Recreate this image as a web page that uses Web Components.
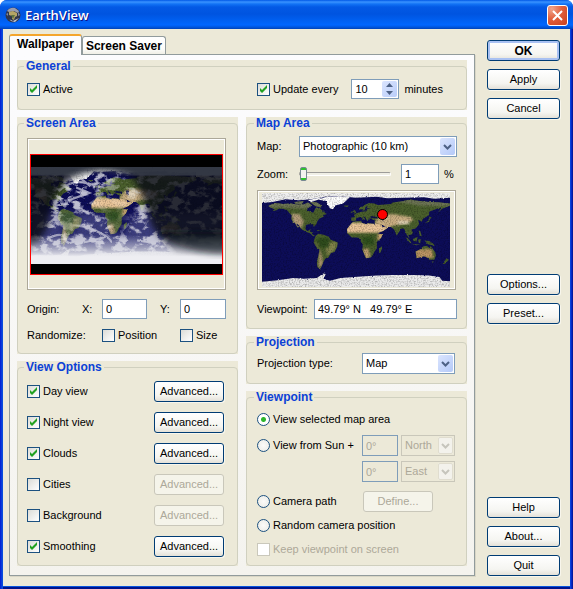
<!DOCTYPE html>
<html lang="en">
<head>
<meta charset="utf-8">
<title>EarthView</title>
<style>
body { margin: 0; background: #fff; font: 11px/13px "Liberation Sans", Arial, sans-serif; color: #000; }
.tabpage { display: grid; grid-template-columns: 1fr 1fr; gap: 7px 8px; align-items: stretch; }
.wide { grid-column: 1 / -1; }
.half { display: grid; grid-template-columns: 1fr 1fr; column-gap: 30px; align-items: center; padding: 6px 0 10px; }
.col { display: flex; flex-direction: column; gap: 7px; }
.grow { flex: 1; }
.right { --pad: 10px; }
.line { display: flex; align-items: center; }
.every { gap: 13px; }
.unit { margin-left: -8px; }
.screen { padding: 8px 2px 9px 0; }
.origin { display: grid; grid-template-columns: 55px 20px 58px 20px 1fr; grid-template-rows: 20px 17px; row-gap: 8px; align-items: center; margin-top: 9px; }
.origin .a { grid-column: 1 / 3; }
.origin .b { grid-column: 3; }
.origin .c { grid-column: 4 / 6; padding-left: 20px; }
.proj { padding: 4px 2px 9px 0; display: grid; grid-template-columns: 1fr 93px; align-items: center; }
.opts { display: grid; grid-template-columns: 1fr 70px; gap: 10px 0; align-items: center; padding: 7px 4px 8px 0; }
</style>
</head>
<body>
<xp-window caption="EarthView">
  <xp-tabs slot="main">
    <div class="tabpage">
      <xp-group class="wide" caption="General">
        <div class="half">
          <xp-check checked>Active</xp-check>
          <div class="line every">
            <xp-check checked>Update every</xp-check>
            <xp-spin value="10"></xp-spin>
            <span class="unit">minutes</span>
          </div>
        </div>
      </xp-group>
      <div class="col">
        <xp-group caption="Screen Area">
          <div class="screen">
            <xp-screen></xp-screen>
            <div class="origin">
              <span>Origin:</span>
              <xp-field label="X:" value="0" width="45px"></xp-field>
              <xp-field label="Y:" value="0"></xp-field>
              <span class="a">Randomize:</span>
              <xp-check class="b">Position</xp-check>
              <xp-check class="c">Size</xp-check>
            </div>
          </div>
        </xp-group>
        <xp-group class="grow" caption="View Options">
          <div class="opts">
            <xp-check checked>Day view</xp-check><xp-button>Advanced...</xp-button>
            <xp-check checked>Night view</xp-check><xp-button>Advanced...</xp-button>
            <xp-check checked>Clouds</xp-check><xp-button>Advanced...</xp-button>
            <xp-check>Cities</xp-check><xp-button disabled>Advanced...</xp-button>
            <xp-check>Background</xp-check><xp-button disabled>Advanced...</xp-button>
            <xp-check checked>Smoothing</xp-check><xp-button>Advanced...</xp-button>
          </div>
        </xp-group>
      </div>
      <div class="col right">
        <xp-group caption="Map Area">
          <xp-maparea></xp-maparea>
        </xp-group>
        <xp-group caption="Projection">
          <div class="proj"><xp-select label="Projection type:" options="Map"></xp-select></div>
        </xp-group>
        <xp-group class="grow" caption="Viewpoint">
          <xp-viewpoint></xp-viewpoint>
        </xp-group>
      </div>
    </div>
  </xp-tabs>
  <xp-sidebar slot="side"></xp-sidebar>
</xp-window>

<template id="earth">
  <svg viewBox="0 0 360 180" preserveAspectRatio="none" aria-hidden="true">
    <defs>
      <filter id="rough" x="0" y="0" width="100%" height="100%" color-interpolation-filters="sRGB">
        <feTurbulence type="fractalNoise" baseFrequency=".22" numOctaves="2" seed="4" result="n"/>
        <feDisplacementMap in="SourceGraphic" in2="n" scale="4" xChannelSelector="R" yChannelSelector="G"/>
      </filter>
      <filter id="grain" x="0" y="0" width="100%" height="100%" color-interpolation-filters="sRGB">
        <feTurbulence type="fractalNoise" baseFrequency=".35" numOctaves="3" seed="9"/>
        <feColorMatrix values="0 0 0 0 0  0 0 0 0 0  0 0 0 0 0  2.6 0 0 0 -1.1"/>
      </filter>
      <filter id="clouds" x="0" y="0" width="100%" height="100%" color-interpolation-filters="sRGB">
        <feTurbulence type="fractalNoise" baseFrequency=".05 .07" numOctaves="6" seed="31"/>
        <feColorMatrix values="0 0 0 0 1  0 0 0 0 1  0 0 0 0 1  6 0 0 0 -2.9"/>
      </filter>
      <filter id="soft" x="-20%" y="-20%" width="140%" height="140%"><feGaussianBlur stdDeviation="6"/></filter>
      <filter id="blend"><feGaussianBlur stdDeviation="2.5"/></filter>
      <clipPath id="land">
        <path d="M12 25 24 19 40 21 55 20 66 22 80 22 88 18 96 24 86 30 88 34 98 38 102 30 104 28 112 30 118 36 124 40 116 43 119 45 110 49 106 54 104 60 99 65 98 60 90 60 85 61 83 66 84 71 89 72 93 69 92 74 97 75 97 80 102 82 98 83 92 77 84 74 75 69 70 61 67 59 66 60 70 66 68 66 63 57 59 55 56 50 57 43 52 38 48 33 40 30 32 30 28 33 20 35 24 31 16 28ZM62 17 80 16 76 21 64 20ZM92 17 105 18 117 26 112 28 102 25ZM95 67 105 70 101 69ZM107 71 112 72 107 73Z"/>
        <path d="M103 82 108 78 118 80 128 84 131 89 145 95 144 103 139 113 132 115 127 124 122 125 118 131 115 138 112 145 106 142 105 133 108 120 110 108 104 104 99 95 100 89Z"/>
        <path d="M174 55 190 53 191 57 200 60 202 58 214 59 217 66 223 78 231 79 228 86 220 94 220 106 215 113 211 121 207 124 199 125 196 118 192 108 193 98 189 93 189 86 180 85 172 85 163 77 163 69 170 60ZM229 102 230 106 227 114 224 115 224 107Z"/>
        <path d="M171 47 171 53 180 53 180 49 184 47 189 46 192 49 197 52 197 49 193 45 197 46 202 54 205 49 209 49 216 54 216 60 215 62 222 77 232 73 240 67 236 64 231 66 228 60 240 65 247 65 253 70 258 82 260 78 267 68 272 68 277 80 283 88 280 80 286 80 289 76 286 70 294 68 301 60 299 51 306 55 308 50 320 42 320 36 335 30 343 28 337 38 345 30 356 26 360 24 360 20 340 18 320 17 305 16 290 14 285 12 270 16 250 18 247 21 235 22 222 23 215 20 205 19 194 24 186 29 186 32 191 31 193 34 197 33 198 28 202 24 201 29 209 30 201 31 200 35 190 36 184 38 181 39 176 42 178 46ZM175 32 178 33 181 38 175 40 177 37ZM170 36 174 35 173 38 170 38ZM157 24 166 24 164 27 158 26Z"/>
        <path d="M321 45 325 47 322 50 320 55 312 58 318 53ZM294 112 302 108 309 102 316 101 321 106 323 101 332 114 333 120 330 128 320 128 317 124 310 121 296 125ZM325 131 329 131 327 134ZM353 125 358 128 350 136 346 136ZM289 88 298 84 296 93 290 92ZM275 85 279 86 286 95 284 96ZM286 97 295 98 304 99 295 100ZM299 89 304 88 303 96 300 95ZM311 91 320 92 328 97 331 101 318 98ZM300 72 303 73 306 83 302 82Z"/>
      </clipPath>
      <g id="ground">
        <g filter="url(#rough)">
          <rect width="360" height="180" fill="#0d0d58"/>
          <g clip-path="url(#land)">
            <rect width="360" height="180" fill="#4a5f2c"/>
            <path d="M0 10H125V27L80 30 30 28 0 30ZM235 12H360V26L300 24Z" fill="#6d7554" filter="url(#blend)"/>
            <path d="M56 40 72 40 80 55 75 68 62 62Z" fill="#b39c78" filter="url(#blend)"/>
            <path d="M98 92 109 105 108 145 118 138 114 118 107 100Z" fill="#a9926a" filter="url(#blend)"/>
            <path d="M120 96 145 94 140 108 125 120Z" fill="#82844c" filter="url(#blend)"/>
            <path d="M103 88 128 84 128 105 112 104Z" fill="#2e4c1f" filter="url(#blend)"/>
            <path d="M160 57 214 57 245 60 240 75 218 76 160 76Z" fill="#eac599" filter="url(#blend)"/>
            <path d="M222 77 235 77 230 90 221 91Z" fill="#c8a470" filter="url(#blend)"/>
            <path d="M190 85 212 83 215 100 195 98Z" fill="#2f4f1e" filter="url(#blend)"/>
            <path d="M192 108 203 106 208 122 198 127Z" fill="#c0a070" filter="url(#blend)"/>
            <path d="M216 54 230 42 250 40 285 46 290 53 270 59 250 63 235 68Z" fill="#c9ae82" filter="url(#blend)"/>
            <path d="M258 54 280 53 282 60 262 60Z" fill="#ddd0b5" filter="url(#blend)"/>
            <path d="M294 108 325 107 328 124 295 126Z" fill="#bb9463" filter="url(#blend)"/>
            <path d="M208 44 221 46 220 49 208 48ZM228 43 234 44 232 53 229 51Z" fill="#10144c"/>
          </g>
          <path d="M88 14 118 7 105 14 94 17ZM107 13 120 8 150 6 168 8 160 16 155 20 140 24 136 31 130 29 126 22 122 15Z" fill="#fff"/>
          <path d="M0 0H360V9L330 11 310 8 270 9 240 10 220 7 180 9 150 6 120 7 95 12 70 14 45 12 20 17 0 19Z" fill="#eee"/>
          <path d="M0 180V170L30 167 60 163 80 164 105 163 117 154 122 155 118 164 130 168 150 163 190 160 220 158 250 157 290 157 320 158 340 161 345 168 360 169V180Z" fill="#eaeaea"/>
        </g>
        <rect width="360" height="180" filter="url(#grain)" opacity=".25"/>
      </g>
      <linearGradient id="ice" x1="0" y1="0" x2="0" y2="1">
        <stop offset="0" stop-color="#d8dae8" stop-opacity="0"/><stop offset=".5" stop-color="#dedfe7" stop-opacity=".75"/><stop offset=".75" stop-color="#eeeef2"/>
      </linearGradient>
      <mask id="night">
        <rect width="360" height="180" fill="#fff"/>
        <path d="M-30 200 -2 160 30 115 40 65 66 26Q125 -8 192 20L214 62 228 108 255 142 300 200Z" fill="#000" filter="url(#soft)"/>
      </mask>
      <mask id="sky">
        <rect width="360" height="180" fill="#bbb"/>
        <path d="M115 54 165 50 205 55 200 75 175 125 155 125 145 95 112 80Z" fill="#1c1c1c" filter="url(#soft)"/>
        <path d="M130 36 165 20 195 30 200 50 135 52ZM50 85 92 85 85 125 60 130Z" fill="#555" filter="url(#soft)"/>
      </mask>
    </defs>
    <g class="day"><use href="#ground"/></g>
    <g class="night">
      <use href="#ground" x="-49"/>
      <use href="#ground" x="311"/>
      <g mask="url(#sky)">
        <path d="M0 85H360V150H0Z" fill="#a9acd8" opacity=".4" filter="url(#soft)"/>
        <rect width="360" height="180" filter="url(#clouds)"/>
        <g fill="none" stroke="#fff" stroke-width="4" opacity=".8" filter="url(#rough)">
          <path d="M52 45Q75 22 105 30T120 22M85 38 110 48 70 62M95 22 112 36M45 72 70 68"/>
          <path d="M72 108Q105 108 130 122T150 140M185 105 170 120 182 138M30 134Q60 118 65 134T92 130M100 140 140 130M200 136 235 142M48 92 30 108"/>
        </g>
      </g>
      <g mask="url(#night)">
        <rect width="360" height="180" fill="#0a0c15" opacity=".83"/>
        <rect width="360" height="16" fill="#343946" opacity=".9"/>
      </g>
      <rect y="126" width="360" height="54" fill="url(#ice)"/>
      <path d="M235 120H380V162Q290 164 235 120Z" fill="#10121c" opacity=".6" filter="url(#soft)"/>
    </g>
  </svg>
</template>

<script>
const base = `
  * { box-sizing: border-box; }
  :host { display: block; box-sizing: border-box; }
  input, select, button { font: inherit; color: inherit; margin: 0; border-radius: 0; }
  input[type=text] { width: 100%; height: 20px; border: 1px solid #7f9db9; background: #fff; padding: 0 3px; outline: 0; min-width: 0; }
  input[type=text]:disabled { background: #ece9d8; color: #aca899; }
`;
function define(name, css, render, ready) {
  customElements.define(name, class extends HTMLElement {
    connectedCallback() {
      if (this.shadowRoot) return;
      const root = this.attachShadow({ mode: "open" });
      root.innerHTML = `<style>${base}${css}</style>${render(this)}`;
      if (ready) ready(root, this);
    }
  });
}
const off = el => el.hasAttribute("disabled") ? "disabled" : "";

define("xp-window", `
  :host { min-height: 100vh; display: flex; flex-direction: column; border-radius: 7px 7px 0 0; overflow: hidden;
    background: linear-gradient(90deg, #0019cf 0, #0831d9 1px, #0855dd 3px, #0855dd calc(100% - 3px), #0831d9 calc(100% - 2px), #00138c 100%); }
  header { height: 29px; display: flex; align-items: center; padding: 1px 5px 0; gap: 4px;
    background: linear-gradient(180deg, #0058e6 0, #3a93ff 2px, #1273f5 4px, #0359e5 7px, #0054e0 14px, #0062f5 22px, #0066ff 25px, #0057e0 27px, #0042b8 29px); }
  h1 { flex: 1; margin: 0; color: #fff; font: 600 13px/18px "Open Sans", "Noto Sans", sans-serif; text-shadow: 1px 1px #0f1089; }
  .icon { width: 16px; height: 16px; }
  button { width: 21px; height: 21px; padding: 0; border: 1px solid #fff; border-radius: 3px; display: grid; place-items: center;
    background: radial-gradient(circle at 20% 15%, #f0a58c, #e2603d 45%, #c8401c); }
  button svg { width: 13px; height: 13px; }
  main { flex: 1; margin: 0 3px 3px; background: #ece9d8; display: grid; grid-template-columns: 1fr 73px; gap: 12px; padding: 5px 10px 10px 6px; box-shadow: 0 1px #0855dd, 0 3px #00138c; }
`, el => `
  <header>
    <svg class="icon" viewBox="0 0 16 16" aria-hidden="true">
      <circle cx="8" cy="8" r="7.5" fill="#30364c"/><path d="M2 4Q5 0 10 1L14 4 13 6 9 4 4 5Z" fill="#969bb0"/>
      <path d="M4 5 8 4 12 6 12 9 10 10 9 13 7 12 7 9 4 8Z" fill="#b6a565"/><path d="M6 8 10 8 8 12Z" fill="#5d7240"/>
      <path d="M2 11Q5 12 6 14L10 15 14 11 12 12 8 14Z" fill="#c3c8d6"/><path d="M1 7 3 6 3 9ZM13 5 15 8 13 9Z" fill="#7d86a5"/>
    </svg>
    <h1>${el.getAttribute("caption")}</h1>
    <button aria-label="Close"><svg viewBox="0 0 13 13"><path d="M2 2 11 11M11 2 2 11" stroke="#fff" stroke-width="2"/></svg></button>
  </header>
  <main><slot name="main"></slot><slot name="side"></slot></main>
`);

define("xp-tabs", `
  :host { display: flex; flex-direction: column; min-width: 0; }
  nav { display: flex; align-items: flex-end; height: 20px; }
  button { font: bold 12px/14px "Liberation Sans", Arial, sans-serif; border: 1px solid #919b9c; border-bottom: 0; border-radius: 3px 3px 0 0; height: 18px; padding: 0 3px; background: linear-gradient(#fff, #fcfcfa 70%, #f0efe6); }
  .on { height: 21px; margin-bottom: -1px; padding: 0 7px 3px; border-top: 2px solid #f4a52c; background: #fcfcfe; z-index: 1; }
  section { flex: 1; border: 1px solid #919b9c; background: linear-gradient(#fcfcfe, #f4f3ee); padding: 5px 7px 9px; box-shadow: 1px 1px #d9d6c6; }
`, () => `
  <nav role="tablist"><button class="on" role="tab" aria-selected="true">Wallpaper</button><button role="tab" aria-selected="false">Screen Saver</button></nav>
  <section role="tabpanel"><slot></slot></section>
`);

define("xp-group", `
  :host { background: #ece9d8; display: flex; flex-direction: column; }
  fieldset { flex: 1; margin: 0; min-width: 0; border: 1px solid #d0d0bf; border-radius: 4px; padding: 0 9px 0 var(--pad, 9px); }
  legend { font: bold 12px/13px "Liberation Sans", Arial, sans-serif; color: #0b41d6; padding: 0 2px; margin-left: -3px; }
`, el => `<fieldset><legend>${el.getAttribute("caption")}</legend><slot></slot></fieldset>`);

define("xp-button", `
  button { width: 100%; height: 21px; padding: 0; border: 1px solid #003c74; border-radius: 3px; background: linear-gradient(#fff, #f5f5f1 70%, #e4e1d8); box-shadow: 1px 1px #f8f6ec; white-space: nowrap; }
  :host([primary]) button { font: bold 12px/14px "Liberation Sans", Arial, sans-serif; box-shadow: inset 0 0 0 2px #a9c1f2; }
  button:disabled { color: #aca899; border-color: #c9c7ba; background: #f5f4ea; box-shadow: none; }
`, el => `<button ${off(el)}><slot></slot></button>`);

define("xp-check", `
  label { display: flex; align-items: center; gap: 3px; white-space: nowrap; }
  .box { display: grid; flex: none; }
  .box > * { grid-area: 1 / 1; }
  input { appearance: none; width: 13px; height: 13px; border: 1px solid #1c5180; background: linear-gradient(135deg, #dcdcd7, #fff); }
  svg { width: 13px; height: 13px; pointer-events: none; visibility: hidden; }
  input:checked + svg { visibility: visible; }
  :host([disabled]) { color: #aca899; }
  input:disabled { border-color: #cac8bb; background: #fff; }
`, el => `<label><span class="box"><input type="checkbox" ${el.hasAttribute("checked") ? "checked" : ""} ${off(el)}><svg viewBox="0 0 13 13"><path d="M3 5v3l2 2 5-5v-3l-5 5z" fill="#21a121"/></svg></span><slot></slot></label>`);

define("xp-field", `
  :host { display: contents; }
  input[type=text] { width: var(--w, 100%); }
`, el => `<label for="c">${el.getAttribute("label")}</label><input id="c" type="text" style="--w:${el.getAttribute("width") || "100%"}" value="${el.getAttribute("value")}">`);

define("xp-spin", `
  :host { width: 48px; height: 20px; display: flex; border: 1px solid #7f9db9; background: #fff; }
  input[type=text] { border: 0; height: 18px; flex: 1; width: 0; }
  div { width: 15px; margin: 1px; border-radius: 2px; background: linear-gradient(135deg, #dbe5fe, #b9cdf9); display: flex; flex-direction: column; }
  button { flex: 1; padding: 0; border: 0; background: none; display: grid; place-items: center; min-height: 0; }
  svg { width: 7px; height: 4px; }
`, el => `<input type="text" aria-label="Update interval in minutes" value="${el.getAttribute("value")}">
  <div><button aria-label="More"><svg viewBox="0 0 7 4"><path d="M0 4 3.5 0 7 4Z" fill="#4d6185"/></svg></button><button aria-label="Less"><svg viewBox="0 0 7 4"><path d="M0 0H7L3.5 4Z" fill="#4d6185"/></svg></button></div>`);

define("xp-select", `
  :host { display: contents; }
  .combo { display: grid; min-width: 0; }
  .combo > * { grid-area: 1 / 1; }
  select { appearance: none; width: 100%; height: 21px; border: 1px solid #7f9db9; background: #fff; padding: 0 18px 0 3px; }
  .arrow { justify-self: end; margin: 2px; width: 15px; height: 17px; border-radius: 2px; background: linear-gradient(135deg, #dbe5fe, #b4c9f8); display: grid; place-items: center; pointer-events: none; }
  svg { width: 9px; height: 6px; }
  path { fill: none; stroke: #4d6185; stroke-width: 2; }
  select:disabled { opacity: 1; border-color: #c9c7ba; background: #ece9d8; color: #aca899; }
  select:disabled + .arrow { background: #f3f2ec; outline: 1px solid #e0ddcf; outline-offset: -1px; }
  select:disabled + .arrow path { stroke: #c6c5bc; }
`, el => `${el.hasAttribute("label") ? `<label for="c">${el.getAttribute("label")}</label>` : ""}
  <div class="combo"><select id="c" ${off(el)} ${el.hasAttribute("label") ? "" : `aria-label="${el.getAttribute("name")}"`}>${el.getAttribute("options").split(",").map(o => `<option>${o}</option>`).join("")}</select>
  <span class="arrow"><svg viewBox="0 0 9 6"><path d="M1 1 4.5 4.5 8 1"/></svg></span></div>`);

define("xp-earth", `
  svg { display: block; width: 100%; height: 100%; }
  :host([mode=day]) .night, :host([mode=night]) .day { display: none; }
`, () => "", root => root.append(document.getElementById("earth").content.cloneNode(true)));

define("xp-screen", `
  :host { height: 152px; border: 1px solid #aca899; box-shadow: inset 1px 1px #fff, inset -1px -1px #fff; padding: 15px 2px 14px; }
  div { height: 121px; border: 1px solid #f00; background: #000; padding: 12px 0 10px; }
  xp-earth { height: 97px; }
`, () => `<div><xp-earth mode="night"></xp-earth></div>`);

define("xp-maparea", `
  :host { padding: 6px 0 9px; display: grid; grid-template-columns: 42px 15px 1fr; align-items: center; }
  .row { grid-column: 1 / -1; display: grid; grid-template-columns: 42px 1fr; align-items: center; }
  .zoom { grid-template-columns: 42px 92px 10px 38px 5px 1fr; margin: 7px 0 6px; }
  .zoom input[type=text] { grid-column: 4; }
  .zoom span { grid-column: 6; }
  .vp { grid-template-columns: 57px 1fr; margin-top: 9px; }
  input[type=range] { appearance: none; width: 100%; height: 15px; background: none; }
  input[type=range]::-webkit-slider-runnable-track { height: 4px; border: 1px solid #9d9c99; border-bottom-color: #fff; border-right-color: #fff; border-radius: 2px; background: #f0efe6; }
  input[type=range]::-webkit-slider-thumb { appearance: none; width: 7px; height: 14px; margin-top: -6px; border: 1px solid #778892; border-radius: 2px; background: linear-gradient(#2dc22d 0 2px, #f3f3ef 2px 10px, #2dc22d 10px); }
  .frame { grid-column: 1 / -1; height: 100px; margin-right: 1px; border: 1px solid #aca899; box-shadow: inset 1px 1px #fff, inset -1px -1px #fff; padding: 2px 5px 2px 4px; }
  .world { position: relative; height: 94px; }
  xp-earth { height: 94px; }
  .pin { position: absolute; left: 63.8%; top: 22.3%; width: 11px; height: 11px; margin: -5px; border: 1px solid #000; border-radius: 50%; background: #f00; }
`, () => `
  <div class="row"><xp-select label="Map:" options="Photographic (10 km)"></xp-select></div>
  <div class="row zoom"><label for="z">Zoom:</label><input id="z" type="range" min="1" max="100" value="1"><input type="text" aria-label="Zoom percent" value="1"><span>%</span></div>
  <div class="frame"><div class="world"><xp-earth mode="day"></xp-earth><span class="pin"></span></div></div>
  <div class="row vp"><xp-field label="Viewpoint:" value="49.79° N   49.79° E"></xp-field></div>
`);

define("xp-viewpoint", `
  :host { display: grid; grid-template-columns: 105px 36px 1fr; grid-template-rows: 15px 8px 21px 5px 21px 9px 21px 6px 15px 8px 16px; align-items: center; padding: 8px 2px 0 0; }
  .full { grid-column: 1 / -1; }
  label { display: flex; align-items: center; gap: 3px; white-space: nowrap; }
  input[type=radio] { appearance: none; width: 13px; height: 13px; border: 1px solid #1c5180; border-radius: 50%; background: radial-gradient(#fbfbf9, #e9e9e4); flex: none; }
  input[type=radio]:checked { background: radial-gradient(circle, #2cb52c 0 2px, #fff 3px); }
  input[type=text] { height: 21px; }
  .r1 { grid-row: 1; } .r2 { grid-row: 3; } .r3 { grid-row: 5; } .r4 { grid-row: 7; } .r5 { grid-row: 9; } .r6 { grid-row: 11; }
  .n { grid-column: 2; } .s { grid-column: 3; display: grid; padding-left: 3px; }
  .define { grid-column: 2 / 4; width: 70px; margin-left: 1px; }
`, () => `
  <label class="full r1"><input type="radio" name="v" checked>View selected map area</label>
  <label class="r2"><input type="radio" name="v">View from Sun +</label>
  <input class="n r2" type="text" value="0°" aria-label="Latitude offset" disabled>
  <div class="s r2"><xp-select name="Latitude direction" options="North" disabled></xp-select></div>
  <input class="n r3" type="text" value="0°" aria-label="Longitude offset" disabled>
  <div class="s r3"><xp-select name="Longitude direction" options="East" disabled></xp-select></div>
  <label class="r4"><input type="radio" name="v">Camera path</label>
  <xp-button class="define r4" disabled>Define...</xp-button>
  <label class="full r5"><input type="radio" name="v">Random camera position</label>
  <xp-check class="full r6" disabled>Keep viewpoint on screen</xp-check>
`);

define("xp-sidebar", `
  :host { display: flex; flex-direction: column; padding-top: 6px; }
  div { display: flex; flex-direction: column; gap: 8px; }
  i { flex: 155; } i + div + i { flex: 172; }
`, () => `
  <div><xp-button primary>OK</xp-button><xp-button>Apply</xp-button><xp-button>Cancel</xp-button></div><i></i>
  <div><xp-button>Options...</xp-button><xp-button>Preset...</xp-button></div><i></i>
  <div><xp-button>Help</xp-button><xp-button>About...</xp-button><xp-button>Quit</xp-button></div>
`);
</script>
</body>
</html>
